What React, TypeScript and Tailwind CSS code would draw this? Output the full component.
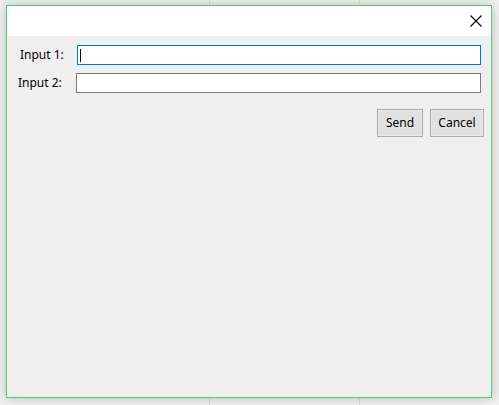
export default function App() {
  return (
    <div className="relative w-[499px] h-[405px] overflow-hidden bg-[#f0f0f0] font-['Segoe_UI','Noto_Sans','Open_Sans',sans-serif] text-[12px] text-black">
      {/* background lines behind the dialog */}
      <div className="absolute left-[209px] top-0 h-full w-px bg-[#d6dde8]" />
      <div className="absolute left-[359px] top-0 h-full w-px bg-[#d6dde8]" />

      {/* dialog window */}
      <div className="absolute left-[6px] top-[5px] w-[486px] h-[393px] border border-[#4fcf72] bg-[#efefef] shadow-[0_0_10px_rgba(0,0,0,0.22)] flex flex-col">
        {/* title bar */}
        <div className="h-[30px] bg-white flex justify-end items-center pr-[9px] shrink-0">
          <svg width="12" height="12" viewBox="0 0 12 12" className="mt-[-1px]">
            <path d="M0.5 0.5 L11.5 11.5 M11.5 0.5 L0.5 11.5" stroke="#000" strokeWidth="1.1" />
          </svg>
        </div>

        {/* form */}
        <div className="flex flex-col pl-[12px] pr-[10px] pt-[9px]">
          <div className="flex items-center h-[20px]">
            <span className="w-[58px] pl-[1px]">Input 1:</span>
            <div className="flex-1 h-[20px] bg-white border border-[#0078d7] flex items-center pl-[2px]">
              <div className="w-px h-[13px] bg-black" />
            </div>
          </div>
          <div className="flex items-center h-[20px] mt-[8px]">
            <span className="w-[58px] -ml-[1px]">Input 2:</span>
            <div className="flex-1 h-[20px] bg-white border border-[#7a7a7a]" />
          </div>
          <div className="flex justify-end gap-[7px] mt-[16px] mr-[-3px]">
            <button className="w-[46px] h-[28px] border border-[#adadad] bg-[#e1e1e1] shadow-[inset_0_0_0_1px_#e8e8e8] text-[12px]">
              Send
            </button>
            <button className="w-[54px] h-[28px] border border-[#adadad] bg-[#e1e1e1] shadow-[inset_0_0_0_1px_#e8e8e8] text-[12px]">
              Cancel
            </button>
          </div>
        </div>
      </div>
    </div>
  );
}
